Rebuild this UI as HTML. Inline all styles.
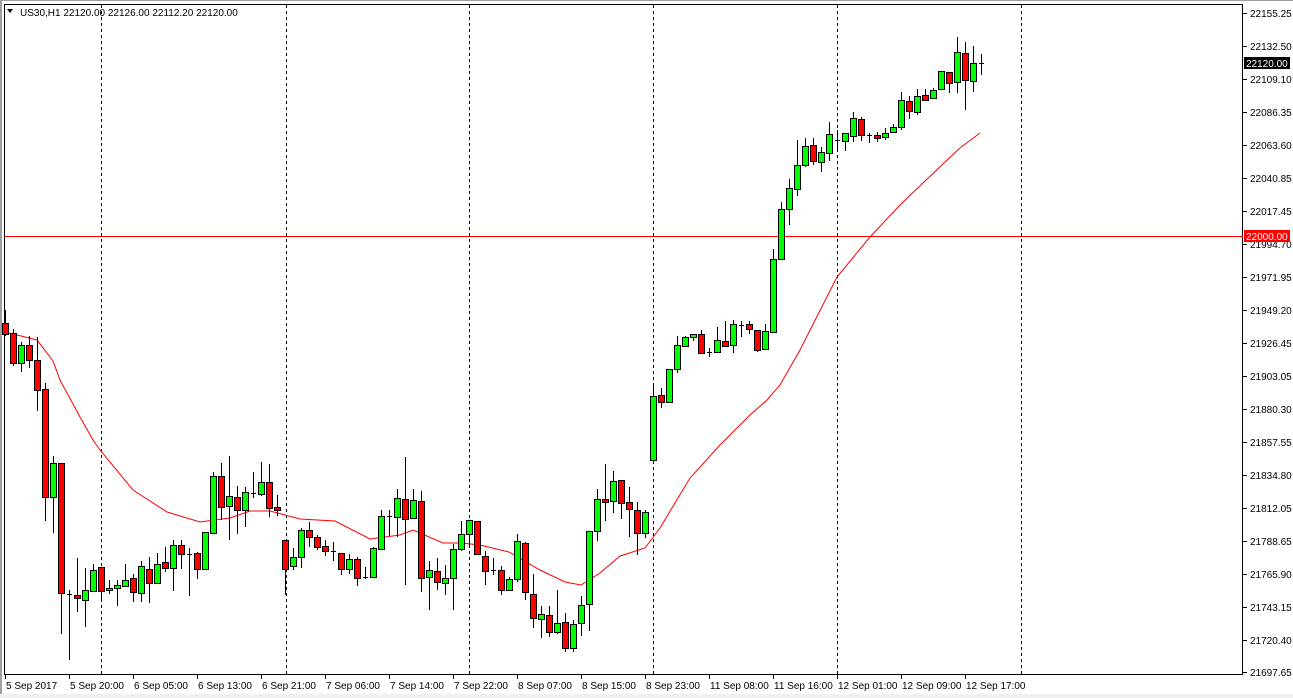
<!DOCTYPE html>
<html><head><meta charset="utf-8"><style>
html,body{margin:0;padding:0;background:#fff;width:1293px;height:698px;overflow:hidden}
svg{display:block}
text{font-family:"Liberation Sans",sans-serif;font-size:10px;fill:#000}
</style></head><body>
<svg id="s" width="1293" height="698" viewBox="0 0 1293 698" xmlns="http://www.w3.org/2000/svg">
<rect x="0" y="0" width="1293" height="698" fill="#fff"/>
<rect x="0" y="0" width="2" height="698" fill="#a0a0a0"/>
<rect x="0" y="0" width="1293" height="1" fill="#a0a0a0"/>
<rect x="0" y="694" width="1293" height="4" fill="#f0f0f0"/>
<rect x="4.5" y="4.5" width="1238" height="670" fill="#fff" stroke="#000"/>
<g stroke="#000" stroke-dasharray="3,3">
<line x1="101.5" y1="5" x2="101.5" y2="674"/><line x1="286.5" y1="5" x2="286.5" y2="674"/>
<line x1="469.5" y1="5" x2="469.5" y2="674"/><line x1="653.5" y1="5" x2="653.5" y2="674"/>
<line x1="837.5" y1="5" x2="837.5" y2="674"/><line x1="1021.5" y1="5" x2="1021.5" y2="674"/>
</g>
<line x1="5" y1="236.5" x2="1243" y2="236.5" stroke="#f00"/>
<polyline fill="none" stroke="#f00" stroke-width="1" points="5,332 37,340 53,361 60,380 80,417 93,440 100,450 133,490 167,512 200,522 230,518 250,511 270,511 300,519 335,521 370,539 400,535 413,530 443,543 461,543 480,545 509,552 540,570 565,582 581,585 600,573 620,556 645,548 660,528 690,478 720,445 750,415 767,400 780,385 800,350 837,277 870,237 900,205 923,183 945,162 960,148 980,133"/>
<g id="c"></g>
<g id="axis"></g>
<polygon points="7,9 13,9 10,13" fill="#000"/>
<text x="20" y="16">US30,H1  22120.00 22126.00 22112.20 22120.00</text>
<g id="bt"></g>
<rect x="1244" y="57" width="46" height="12" fill="#000"/>
<text x="1246" y="67" style="fill:#fff">22120.00</text>
<rect x="1244" y="230" width="46" height="12" fill="#f00"/>
<text x="1246" y="240" style="fill:#fff">22000.00</text>
</svg>
<script>
var D=[[5,323,334,310,336,'r'],[13,333,363,329,366,'r'],[21,345,363,342,372,'g'],[29,345,360,336,368,'r'],[37,360,390,337,411,'r'],[45,389,497,383,521,'r'],[53,463,497,456,533,'g'],[61,463,593,463,634,'r'],[69,594,594,590,660,'d'],[77,595,598,558,612,'r'],[85,590,600,568,627,'g'],[93,570,591,564,591,'g'],[101,567,591,567,600,'r'],[109,588,590,580,594,'g'],[117,585,588,580,606,'g'],[125,580,586,564,586,'g'],[133,578,592,574,602,'r'],[141,566,593,561,602,'g'],[149,569,583,557,603,'r'],[157,564,583,553,584,'g'],[165,562,568,547,572,'r'],[173,545,568,540,591,'g'],[181,545,554,540,569,'r'],[189,554,554,548,596,'d'],[197,553,569,552,579,'r'],[205,532,569,532,569,'g'],[213,476,533,472,533,'g'],[221,476,507,463,520,'r'],[229,496,506,456,540,'g'],[237,497,510,486,534,'r'],[245,492,510,487,527,'g'],[253,493,493,472,498,'d'],[261,482,494,462,496,'g'],[269,482,508,464,517,'r'],[277,507,510,495,516,'r'],[285,540,569,540,595,'r'],[293,557,566,548,570,'g'],[301,530,557,528,568,'g'],[309,530,537,522,547,'r'],[317,537,547,535,550,'r'],[325,546,551,540,556,'r'],[333,551,551,542,561,'d'],[341,553,569,553,575,'r'],[349,559,569,554,574,'g'],[357,559,578,557,586,'r'],[365,577,577,567,579,'d'],[373,548,577,547,577,'g'],[381,516,549,510,550,'g'],[389,516,516,510,536,'d'],[397,498,517,489,537,'g'],[405,499,519,457,585,'r'],[413,500,518,489,518,'g'],[421,501,578,491,592,'r'],[429,570,577,561,610,'g'],[437,571,582,558,590,'r'],[445,578,583,565,595,'g'],[453,549,578,544,610,'g'],[461,534,549,521,551,'g'],[469,520,534,520,548,'g'],[477,521,554,521,554,'r'],[485,556,571,551,585,'r'],[493,570,570,558,575,'d'],[501,570,590,566,595,'r'],[509,579,590,577,591,'g'],[517,541,579,534,582,'g'],[525,543,592,542,600,'r'],[533,594,618,574,628,'r'],[541,614,619,606,638,'g'],[549,615,632,606,637,'r'],[557,623,632,590,634,'g'],[565,622,648,613,652,'r'],[573,624,648,620,652,'g'],[581,605,623,596,636,'g'],[589,531,604,531,631,'g'],[597,499,531,489,541,'g'],[605,499,502,464,521,'r'],[613,481,501,471,513,'g'],[621,480,503,480,519,'r'],[629,502,509,487,537,'r'],[637,510,533,502,555,'r'],[645,512,533,510,538,'g'],[653,396,460,383,460,'g'],[661,395,402,388,408,'r'],[669,369,402,369,402,'g'],[677,345,369,336,373,'g'],[685,337,346,336,347,'g'],[693,334,337,334,341,'g'],[701,334,353,330,353,'r'],[709,352,352,348,357,'d'],[717,340,352,327,353,'g'],[725,341,346,321,347,'r'],[733,324,345,320,353,'g'],[741,325,325,321,337,'d'],[749,324,329,321,334,'r'],[757,330,350,330,352,'r'],[765,331,349,324,349,'g'],[773,259,332,249,332,'g'],[781,209,259,202,260,'g'],[789,188,209,179,225,'g'],[797,165,189,140,196,'g'],[805,146,165,138,167,'g'],[813,145,161,138,165,'r'],[821,152,162,147,172,'g'],[829,134,153,122,161,'g'],[837,140,140,130,150,'d'],[845,133,141,133,151,'g'],[853,118,136,112,142,'g'],[861,119,135,117,141,'r'],[869,135,135,133,143,'d'],[877,135,138,132,142,'r'],[885,133,137,128,140,'g'],[893,127,132,124,133,'g'],[901,100,127,92,130,'g'],[909,101,111,96,119,'r'],[917,96,112,89,115,'g'],[925,95,100,89,100,'r'],[933,90,98,88,99,'g'],[941,71,89,71,89,'g'],[949,72,83,72,93,'r'],[957,52,82,37,93,'g'],[965,53,80,42,110,'r'],[973,63,81,46,92,'g'],[981,63,63,54,75,'d']];
var ns="http://www.w3.org/2000/svg",h='';
D.forEach(function(d){var x=d[0];
h+='<line x1="'+(x+.5)+'" y1="'+d[3]+'" x2="'+(x+.5)+'" y2="'+d[4]+'" stroke="#000"/>';
if(d[5]=='d'){h+='<line x1="'+(x-2)+'" y1="'+(d[1]+.5)+'" x2="'+(x+3)+'" y2="'+(d[1]+.5)+'" stroke="#000"/>';}
else{h+='<rect x="'+(x-2.5)+'" y="'+(d[1]+.5)+'" width="6" height="'+Math.max(1,d[2]-d[1])+'" fill="'+(d[5]=='g'?'#0f0':'#f00')+'" stroke="#000"/>';}
});
document.getElementById('c').innerHTML=h;
var L=[["22155.25",13],["22132.50",46],["22109.10",79],["22086.35",112],["22063.60",145],["22040.85",178],["22017.45",211],["21994.70",244],["21971.95",277],["21949.20",310],["21926.45",343],["21903.05",376],["21880.30",409],["21857.55",442],["21834.80",475],["21812.05",508],["21788.65",541],["21765.90",574],["21743.15",607],["21720.40",640],["21697.65",672]];
var a='';L.forEach(function(l){a+='<line x1="1243" y1="'+(l[1]+.5)+'" x2="1247" y2="'+(l[1]+.5)+'" stroke="#000"/><text x="1250" y="'+(l[1]+4)+'">'+l[0]+'</text>';});
var B=["5 Sep 2017","5 Sep 20:00","6 Sep 05:00","6 Sep 13:00","6 Sep 21:00","7 Sep 06:00","7 Sep 14:00","7 Sep 22:00","8 Sep 07:00","8 Sep 15:00","8 Sep 23:00","11 Sep 08:00","11 Sep 16:00","12 Sep 01:00","12 Sep 09:00","12 Sep 17:00"];
B.forEach(function(b,i){var x=5+64*i;a+='<line x1="'+(x+.5)+'" y1="675" x2="'+(x+.5)+'" y2="679" stroke="#000"/><text x="'+(x+1)+'" y="689">'+b+'</text>';});
document.getElementById('axis').innerHTML=a;
</script>
</body></html>
